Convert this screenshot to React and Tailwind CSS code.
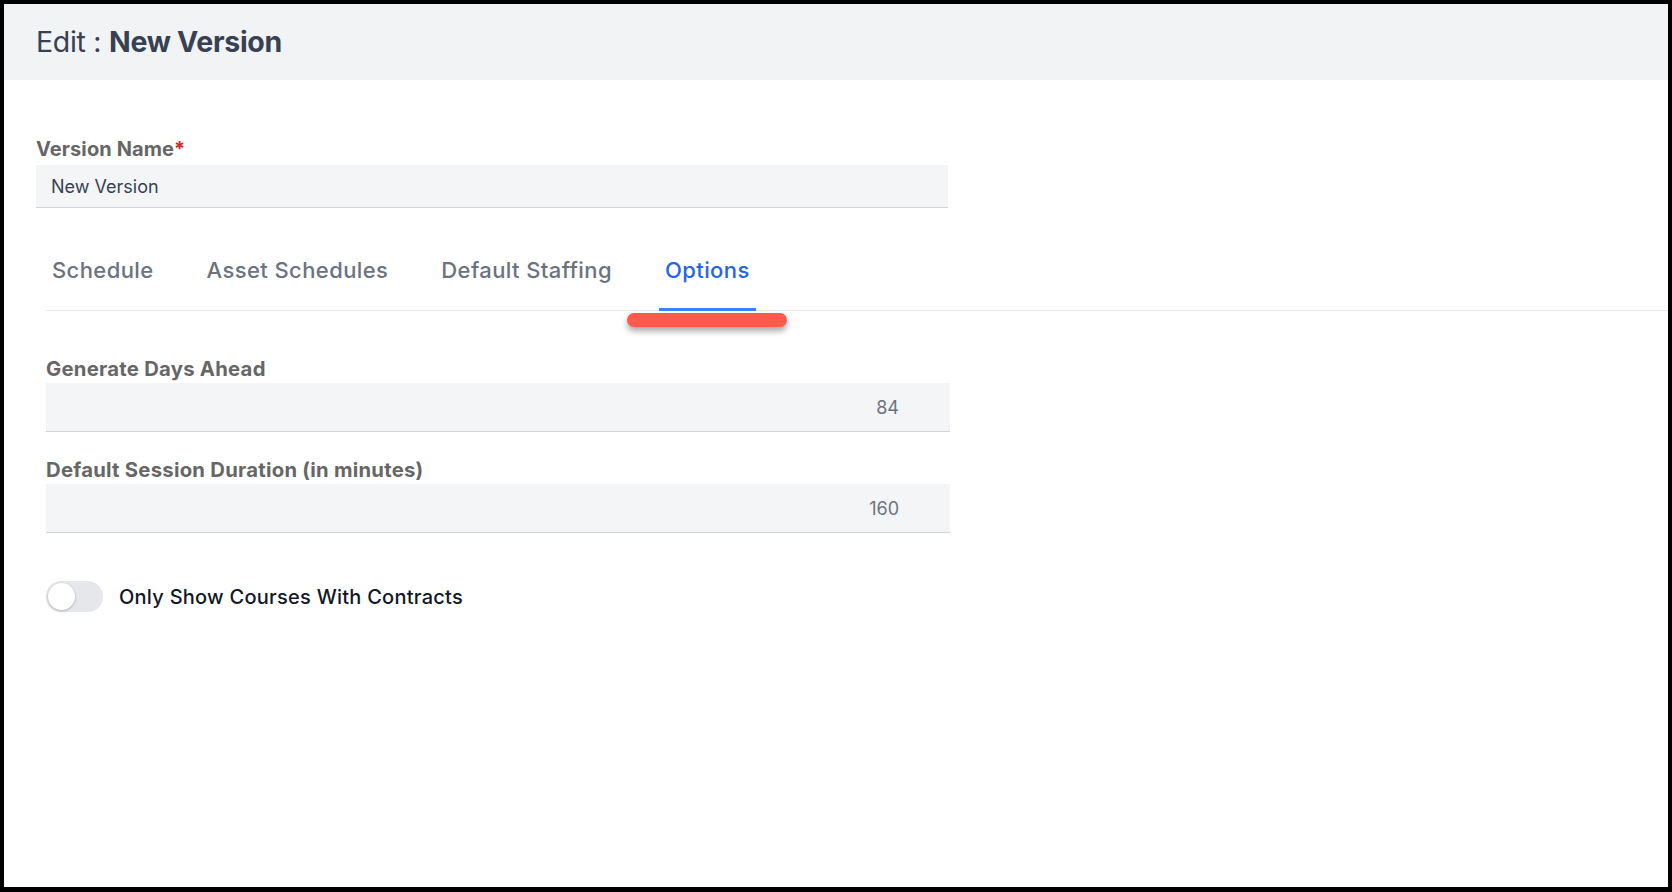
import React, { useState } from "react";

const TABS = ["Schedule", "Asset Schedules", "Default Staffing", "Options"];

function Field({ label, value }) {
  return (
    <div>
      <label className="block text-[20.3px] tracking-[0.25px] leading-6 font-bold text-[#666666] mb-[2px]">{label}</label>
      <div className="h-[49px] bg-[#f4f5f7] border-b border-[#d1d5db] flex items-center justify-end pr-[51px] text-[18px] text-[#6b7280]">
        {value}
      </div>
    </div>
  );
}

function App() {
  const [tab, setTab] = useState("Options");
  const [onlyContracts, setOnlyContracts] = useState(false);

  return (
    <div
      className="w-screen h-screen border-4 border-b-[5px] border-black bg-white overflow-hidden flex flex-col"
      style={{ fontFamily: "Inter, 'Noto Sans', sans-serif" }}
    >
      {/* Header */}
      <div className="h-[76px] shrink-0 bg-[#f2f3f5] px-[32px] flex items-center">
        <h1 className="text-[28.5px] text-[#374151] tracking-[-0.3px]">
          Edit : <span className="font-bold">New Version</span>
        </h1>
      </div>

      <main className="pl-[32px] pt-[57px]">
        <div className="w-[912px]">
          <label className="block text-[20px] tracking-[0.1px] leading-6 font-bold text-[#666666] mb-[4px]">
            Version Name<span className="text-[#dc2626]">*</span>
          </label>
          <div className="h-[43px] bg-[#f4f5f7] border-b border-[#d1d5db] flex items-center pl-[15px] text-[18px] text-[#374151]">
            New Version
          </div>
        </div>

        {/* Tabs */}
        <div className="relative ml-[10px] mt-[48px]">
          <div className="flex gap-[41px] border-b border-[#e5e7eb]">
            {TABS.map((t) => (
              <button
                key={t}
                onClick={() => setTab(t)}
                className={`-mb-px px-[6px] pb-6 leading-7 text-[22px] tracking-[0.4px] font-medium border-b-[3px] ${
                  tab === t ? "text-[#2563eb] border-[#3b82f6]" : "text-[#6b7280] border-transparent"
                }`}
              >
                {t}
              </button>
            ))}
          </div>
          {/* annotation marker */}
          <div className="absolute left-[581px] top-[57px] w-[160px] h-[14px] rounded-full bg-[#ff5a4c] shadow-[0_4px_6px_rgba(0,0,0,0.35)]" />
        </div>

        <div className="ml-[10px] w-[904px]">
          <div className="mt-[46px]">
            <Field label="Generate Days Ahead" value="84" />
          </div>
          <div className="mt-[26px]">
            <Field label="Default Session Duration (in minutes)" value="160" />
          </div>

          <div className="mt-[48px] flex items-center gap-[16px]">
            <button
              onClick={() => setOnlyContracts(!onlyContracts)}
              className={`relative w-[57px] h-[31px] rounded-full ${onlyContracts ? "bg-[#3b82f6]" : "bg-[#e5e7eb]"}`}
            >
              <span
                className={`absolute top-[2px] w-[27px] h-[27px] rounded-full bg-white shadow-[0_1px_3px_rgba(0,0,0,0.25)] ${
                  onlyContracts ? "left-[28px]" : "left-[2px]"
                }`}
              />
            </button>
            <span className="text-[20px] tracking-[0.25px] font-medium text-[#111827]">Only Show Courses With Contracts</span>
          </div>
        </div>
      </main>
    </div>
  );
}

export default App;
